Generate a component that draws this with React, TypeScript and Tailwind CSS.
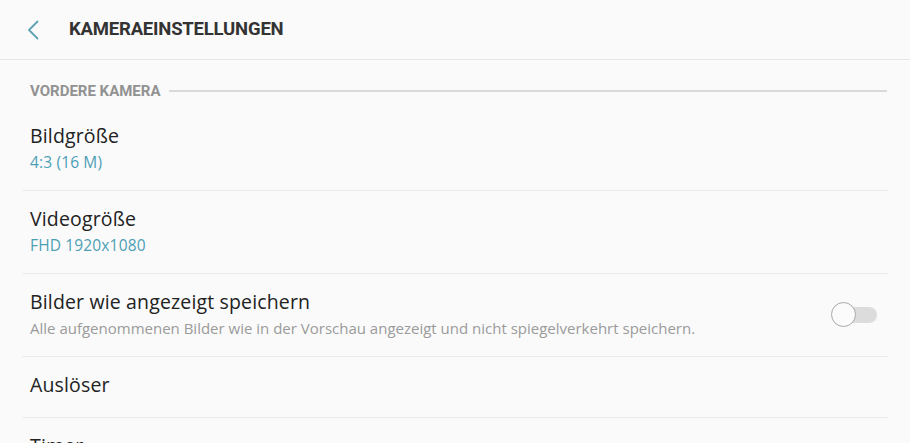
import React from "react";

const font = { fontFamily: "'Open Sans', 'Noto Sans', sans-serif" };
const headFont = { fontFamily: "Roboto, 'Noto Sans', sans-serif" };

function Row({ title, sub, subTeal, toggle, last }: { title: string; sub?: string; subTeal?: boolean; toggle?: boolean; last?: boolean }) {
  return (
    <div className={`mx-[22px] flex items-center ${last ? "" : "border-b border-[#ebebeb]"}`}>
      <div className={`flex-1 pl-2 pt-[16px] ${sub ? "pb-[18px]" : "pb-[20px]"}`}>
        <div className="text-[19.5px] leading-6 tracking-[0.15px] text-[#222]">{title}</div>
        {sub && (
          <div
            className={`mt-[4px] leading-5 ${subTeal ? "text-[15.5px] tracking-[0.15px] text-[#4d9fb5]" : "text-[15px] text-[#9b9b9b]"}`}
          >
            {sub}
          </div>
        )}
      </div>
      {toggle && (
        <div className="relative mr-[11px] h-[26px] w-[46px]">
          <div className="absolute right-0 top-[5px] h-[16px] w-[34px] rounded-full bg-[#dcdcdc]" />
          <div className="absolute left-0 top-0 h-[25px] w-[25px] rounded-full border-[1.5px] border-[#a8a8a8] bg-[#fbfbfb]" />
        </div>
      )}
    </div>
  );
}

export default function App() {
  return (
    <div className="h-[443px] w-[910px] overflow-hidden bg-[#fafafa]" style={font}>
      <div className="flex h-[60px] items-center border-b border-[#e6e6e6]">
        <svg className="ml-[27px]" width="12" height="20" viewBox="0 0 12 20" fill="none">
          <path d="M10.5 1.5 L2 10 L10.5 18.5" stroke="#5fa3b3" strokeWidth="1.8" strokeLinecap="round" strokeLinejoin="round" />
        </svg>
        <div className="ml-[30px] text-[18.5px] font-bold tracking-[-0.2px] text-[#333]" style={headFont}>KAMERAEINSTELLUNGEN</div>
      </div>
      <div className="flex items-center pl-[30px] pr-[23px] pt-[21px] pb-[7px]">
        <div className="text-[15px] font-bold leading-5 text-[#929292]" style={headFont}>VORDERE KAMERA</div>
        <div className="ml-[8px] h-[2px] flex-1 bg-[#d9d9d9]" />
      </div>
      <Row title="Bildgröße" sub="4:3 (16 M)" subTeal />
      <Row title="Videogröße" sub="FHD 1920x1080" subTeal />
      <Row title="Bilder wie angezeigt speichern" sub="Alle aufgenommenen Bilder wie in der Vorschau angezeigt und nicht spiegelverkehrt speichern." toggle />
      <Row title="Auslöser" />
      <Row title="Timer" last />
    </div>
  );
}
